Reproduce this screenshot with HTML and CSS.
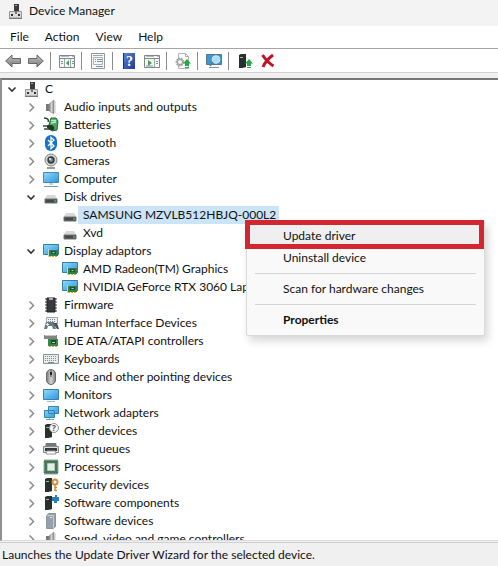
FILE: index.html
```html
<!DOCTYPE html>
<html lang="en">
<head>
<meta charset="utf-8">
<title>Device Manager</title>
<link rel="stylesheet" href="styles.css">
</head>
<body>
<svg class="sprite" aria-hidden="true">
  <defs>
    <linearGradient id="g-blue" x1="0" y1="0" x2="1" y2="1"><stop offset="0" stop-color="#8fdcfb"/><stop offset="1" stop-color="#2f94dc"/></linearGradient>
    <linearGradient id="g-grey" x1="0" y1="0" x2="1" y2="0"><stop offset="0" stop-color="#777"/><stop offset=".5" stop-color="#d5d5d5"/><stop offset="1" stop-color="#808080"/></linearGradient>
    <linearGradient id="g-arrow" x1="0" y1="0" x2="0" y2="1"><stop offset="0" stop-color="#c4c4c4"/><stop offset="1" stop-color="#777"/></linearGradient>
    <linearGradient id="g-help" x1="0" y1="0" x2="1" y2="1"><stop offset="0" stop-color="#5f86d8"/><stop offset="1" stop-color="#1c3a94"/></linearGradient>
  </defs>
  <symbol id="down" viewBox="0 0 16 16"><path d="M4.500 6.500 8 10l3.500-3.500" fill="none" stroke="#333" stroke-width="1.600"/></symbol>
  <symbol id="right" viewBox="0 0 16 16"><path d="M6.500 4.500 10.500 8.500l-4 4" fill="none" stroke="#8c8c8c" stroke-width="1.500"/></symbol>
  <symbol id="pc" viewBox="0 0 16 16"><path d="M6 1h5v7H6z" fill="#3c3c3c"/><path d="M7 2.500h2" stroke="#aaa"/><path d="M1.500 8.500h12V15h-12z" fill="#dcdcdc" stroke="#959595"/><path d="M1 15.500h13" stroke="#777"/><path d="M3 11h2v2H3zM10 11h2v2h-2z" fill="#333"/><path d="M7 8h2v3H7z" fill="#777"/></symbol>
  <symbol id="speaker" viewBox="0 0 16 16"><path d="M3 5h3v7H3z" fill="#777"/><path d="M6 5 11 1v14l-5-3z" fill="url(#g-grey)" stroke="#909090" stroke-width=".6"/><path d="M12 2v12" stroke="#c6c6c6"/></symbol>
  <symbol id="battery" viewBox="0 0 16 16"><path d="M8 1h5l2 3-1 9-5 1-4-3z" fill="#4da65f" stroke="#1f6a32"/><path d="M8 3.500h5M8 6l5-1" stroke="#b9e8c2" stroke-width="1.500"/><path d="M1 1c4 0 5 2 4 4" fill="none" stroke="#23352a" stroke-width="1.400"/><path d="M4 8h4c2 0 4 2 3 5H7l-3-2z" fill="#203b2a"/><path d="M0 9h5M1 12h5" stroke="#34493c" stroke-width="1.300"/></symbol>
  <symbol id="bluetooth" viewBox="0 0 16 16"><rect x="2" y="0" width="12" height="16" rx="6" fill="#1274cf"/><path d="m5 5 6 6-3 2.500v-11L11 5l-6 6" fill="none" stroke="#fff" stroke-width="1.300"/></symbol>
  <symbol id="camera" viewBox="0 0 16 16"><path d="M4 15h8" stroke="#777" stroke-width="1.500"/><circle cx="8" cy="7" r="6" fill="#d5d5d5" stroke="#848484"/><circle cx="8" cy="7" r="3.700" fill="#343b41"/><circle cx="8" cy="7" r="2" fill="#778fa0"/><circle cx="7" cy="6" r="1" fill="#eee"/></symbol>
  <symbol id="computer" viewBox="0 0 16 16"><path d="M.5 1.500h15v10H.5z" fill="url(#g-blue)" stroke="#418ab8"/><path d="M6 12h4v2H6z" fill="#c5d2d9"/><path d="M1 15.500h14" stroke="#7999ac"/></symbol>
  <symbol id="monitor" viewBox="0 0 16 16"><path d="M.5 2.500h15v10H.5z" fill="url(#g-blue)" stroke="#3782b5"/><path d="M4 14.500h8" stroke="#9db9c8"/></symbol>
  <symbol id="disk" viewBox="0 0 16 16"><path d="m4 6-2.500 4h13L12 6z" fill="#d8d8d8"/><path d="M2 10h12v4H2z" fill="#45494b" stroke="#757575"/><path d="M11 12h2" stroke="#55dba7"/></symbol>
  <symbol id="display" viewBox="0 0 16 16"><path d="M.5 1.500h15v10H.5z" fill="url(#g-blue)" stroke="#377da5"/><path d="M6 7h9v6H6z" fill="#318142"/><path d="M8 8h5v3H8z" fill="#24513b"/><path d="M9.500 9.500h2" stroke="#a4dda4"/><path d="M6 13.500h9" stroke="#dfb82e" stroke-dasharray="2 1"/><path d="M5.500 6v8" stroke="#c5d5d9"/></symbol>
  <symbol id="chip" viewBox="0 0 16 16"><path d="M2 2h12M2 5h12M2 8h12M2 11h12M2 14h12" stroke="#777" stroke-width="1.500"/><path d="M4 1h8v14H4z" fill="#37393c" stroke="#222"/><path d="M6 1h4v2H6z" fill="#aaa"/></symbol>
  <symbol id="hid" viewBox="0 0 16 16"><path d="M3.500 2.500h11v6h-11z" fill="#eee" stroke="#9aa8ad"/><path d="M5 4.500h8M5 6.500h8" stroke="#7b8c92" stroke-dasharray="1 1"/><path d="M3 7h8l2 7h-3l-1-3H5l-1 3H1z" fill="#687b85"/><path d="M10 8h4l2 6h-2l-2-3" fill="#405461"/><path d="M3 9.500h3M4.500 8v3" stroke="#e4edf0"/></symbol>
  <symbol id="ide" viewBox="0 0 16 16"><path d="M1 2h13v4H1z" fill="#858585"/><path d="M2 2.500h11" stroke="#c8c8c8"/><path d="M5 6h10v7H5z" fill="#388549"/><path d="M8 7h5v4H8z" fill="#244832"/><path d="M9 9.500h3" stroke="#b4d8a4"/><path d="M6 13.500h8" stroke="#cda832" stroke-dasharray="2 1"/></symbol>
  <symbol id="keyboard" viewBox="0 0 16 16"><path d="M.5 3.500h15v9H.5z" fill="#e8ebec" stroke="#89959b"/><path d="M2 5.500h12M2 7.500h12M2 9.500h12" stroke="#87949a" stroke-dasharray="1 1"/><path d="M5 11.500h6" stroke="#7f8a8f"/></symbol>
  <symbol id="mouse" viewBox="0 0 16 16"><rect x="3.500" y=".5" width="9" height="15" rx="4.500" fill="url(#g-grey)" stroke="#63696e"/><path d="M8 1v7" stroke="#4c555b"/><path d="M8 3v3" stroke="#222" stroke-width="2"/></symbol>
  <symbol id="network" viewBox="0 0 16 16"><path d="M5.500 1.500h10v7h-10zM1.500 5.500h10v7h-10z" fill="url(#g-blue)" stroke="#3685ae"/><path d="M6.500 13v2M3 14.500h8" stroke="#77a5b8"/></symbol>
  <symbol id="tower" viewBox="0 0 16 16"><path d="m2 2 2-1h5v13l-2 1H2z" fill="#28302e"/><path d="M3 4.500h3" stroke="#9eb9a4"/><path d="M6 14.500h2" stroke="#858585"/></symbol>
  <symbol id="printer" viewBox="0 0 16 16"><path d="M3 2h10l1 4H2z" fill="#777"/><path d="M.5 5.500h15v6H.5z" fill="#d7dcde" stroke="#81898c"/><path d="M2 7h12v3H2z" fill="#333a3c"/><path d="M4 10h8l1 3H3z" fill="#fff" stroke="#999"/></symbol>
  <symbol id="processor" viewBox="0 0 16 16"><path d="M1.500 1.500h13v13h-13z" fill="#427657" stroke="#345e46" stroke-width="2" stroke-dasharray="1 1"/><path d="M2 2h12v12H2z" fill="#43775a"/><path d="M4.500 4.500h7v7h-7z" fill="#e1eee5" stroke="#b5c8b9"/></symbol>
  <symbol id="security" viewBox="0 0 16 16"><use href="#tower"/><circle cx="12" cy="5" r="2.500" fill="none" stroke="#cf9140" stroke-width="2"/><path d="M12 7v7M12 10.500h2M12 13.500h2" stroke="#cf9140" stroke-width="1.500"/></symbol>
  <symbol id="component" viewBox="0 0 16 16"><use href="#tower"/><path d="M9 2h3V0h2v2h2v4h-2v2h-3V6H9z" fill="#267fb7"/></symbol>
  <symbol id="software" viewBox="0 0 16 16"><path d="m3.500 2.500 2-2h7v13l-2 2h-7z" fill="#94a1aa" stroke="#8a969e"/><path d="M3.500 2.500h7v13" stroke="#c6ced3" fill="none"/><path d="M7 4.500h2" stroke="#e5eaed"/></symbol>
  <symbol id="arrow" viewBox="0 0 16 16"><path d="M.7 8 7 2v3.500h8.500v5H7V14z" fill="url(#g-arrow)" stroke="#666"/></symbol>
  <symbol id="window" viewBox="0 0 16 16"><path d="M.5 2.500h15v12H.5z" fill="#f5f6f6" stroke="#80878b"/><path d="M1 5.500h14" stroke="#7e8a91"/><path d="M2 3.500h8M13 3.500h2" stroke="#b1b7ba"/></symbol>
  <symbol id="tree-window" viewBox="0 0 16 16"><use href="#window"/><path d="M5.500 6v8M11.500 6v8" stroke="#9ca8ae"/><path d="M2 8.500h2M2 10.500h2M13 8.500h2M13 10.500h2" stroke="#839197"/><path d="M10 7v6l-3-3z" fill="#4e9c4e"/></symbol>
  <symbol id="properties" viewBox="0 0 16 16"><path d="M1.500.5h13v15h-13z" fill="#f8f8f8" stroke="#8c999f"/><path d="M3 2.500h10" stroke="#9aa8af"/><path d="M3.500 4.500h9v7h-9z" fill="none" stroke="#a8b2b8"/><path d="M5 6.500h1M7 6.500h5M5 8.500h1M7 8.500h5M6 13.500h7" stroke="#7d939f"/></symbol>
  <symbol id="action-window" viewBox="0 0 16 16"><use href="#window"/><path d="M10.500 6v8" stroke="#9ca8ae"/><path d="M12 8.500h2M12 10.500h2M2 13h7" stroke="#839197"/><path d="M4 7v6l4-3z" fill="#4e9c4e"/></symbol>
  <symbol id="up" viewBox="0 0 16 16"><path d="m12 6-4 4.500h2V13h4v-2.500h2z" fill="#2ba646"/><path d="M10 14.500h4" stroke="#2ba646"/></symbol>
  <symbol id="update" viewBox="0 0 16 16"><path d="M3.500.5h7l3 3v12h-10z" fill="#fafafa" stroke="#b5b5b5"/><path d="M10.500.5v3h3" fill="none" stroke="#a9a9a9"/><circle cx="5" cy="9" r="3.300" fill="#eee" stroke="#a0a0a0" stroke-width="2.200" stroke-dasharray="1.600 .7"/><circle cx="5" cy="9" r="2.500" fill="#f6f6f6" stroke="#999"/><use href="#up"/></symbol>
  <symbol id="scan" viewBox="0 0 16 16"><path d="M.5 1.500h15v10H.5z" fill="#3c99ce" stroke="#56798d"/><path d="M3 14.500h10" stroke="#8398a4"/><circle cx="10" cy="6.500" r="3.800" fill="#a9dcf5" stroke="#d6eef9"/><path d="m7 9-3 4" stroke="#607b89" stroke-width="1.600"/></symbol>
  <symbol id="install" viewBox="0 0 16 16"><use href="#tower"/><use href="#up"/></symbol>
  <symbol id="remove" viewBox="0 0 16 16"><path d="M2.500 2c2 3 6 8 11 11M13 2C9 5 5 9 3 14" fill="none" stroke="#bd1427" stroke-width="3"/></symbol>
</svg>

<main class="window">
  <header class="titlebar"><svg class="icon"><use href="#pc"/></svg><h1>Device Manager</h1></header>
  <nav class="menubar" aria-label="Main menu"><button>File</button><button>Action</button><button>View</button><button>Help</button></nav>
  <div class="toolbar" role="toolbar" aria-label="Tools">
    <button aria-label="Back"><svg class="icon"><use href="#arrow"/></svg></button>
    <button aria-label="Forward"><svg class="icon flipped"><use href="#arrow"/></svg></button>
    <span class="divider"></span>
    <button aria-label="Show console tree"><svg class="icon"><use href="#tree-window"/></svg></button>
    <span class="divider"></span>
    <button aria-label="Properties"><svg class="icon"><use href="#properties"/></svg></button>
    <span class="divider"></span>
    <button aria-label="Help topics"><svg class="icon" viewBox="0 0 16 16"><path d="M2 0h12v16H2z" fill="url(#g-help)"/><path d="M2.500 0v16" stroke="#193479"/><text x="8.500" y="13" text-anchor="middle" class="icon-help">?</text></svg></button>
    <button aria-label="Show action pane"><svg class="icon"><use href="#action-window"/></svg></button>
    <span class="divider"></span>
    <button aria-label="Update driver"><svg class="icon"><use href="#update"/></svg></button>
    <span class="divider"></span>
    <button aria-label="Scan for changes"><svg class="icon"><use href="#scan"/></svg></button>
    <span class="divider"></span>
    <button aria-label="Add driver"><svg class="icon"><use href="#install"/></svg></button>
    <button aria-label="Uninstall"><svg class="icon"><use href="#remove"/></svg></button>
  </div>
  <section class="pane" aria-label="Devices">
    <ul class="tree">
      <li><div class="row"><button class="toggle" aria-label="Collapse C"><svg class="icon"><use href="#down"/></svg></button><svg class="icon"><use href="#pc"/></svg><span class="label">C</span></div>
        <ul>
          <li><div class="row"><button class="toggle" aria-label="Expand"><svg class="icon"><use href="#right"/></svg></button><svg class="icon"><use href="#speaker"/></svg><span class="label">Audio inputs and outputs</span></div></li>
          <li><div class="row"><button class="toggle" aria-label="Expand"><svg class="icon"><use href="#right"/></svg></button><svg class="icon"><use href="#battery"/></svg><span class="label">Batteries</span></div></li>
          <li><div class="row"><button class="toggle" aria-label="Expand"><svg class="icon"><use href="#right"/></svg></button><svg class="icon"><use href="#bluetooth"/></svg><span class="label">Bluetooth</span></div></li>
          <li><div class="row"><button class="toggle" aria-label="Expand"><svg class="icon"><use href="#right"/></svg></button><svg class="icon"><use href="#camera"/></svg><span class="label">Cameras</span></div></li>
          <li><div class="row"><button class="toggle" aria-label="Expand"><svg class="icon"><use href="#right"/></svg></button><svg class="icon"><use href="#computer"/></svg><span class="label">Computer</span></div></li>
          <li><div class="row"><button class="toggle" aria-label="Collapse"><svg class="icon"><use href="#down"/></svg></button><svg class="icon"><use href="#disk"/></svg><span class="label">Disk drives</span></div>
            <ul>
              <li><div class="row leaf selected"><svg class="icon"><use href="#disk"/></svg><span class="label">SAMSUNG MZVLB512HBJQ-000L2</span></div></li>
              <li><div class="row leaf"><svg class="icon"><use href="#disk"/></svg><span class="label">Xvd</span></div></li>
            </ul></li>
          <li><div class="row"><button class="toggle" aria-label="Collapse"><svg class="icon"><use href="#down"/></svg></button><svg class="icon"><use href="#display"/></svg><span class="label">Display adaptors</span></div>
            <ul>
              <li><div class="row leaf"><svg class="icon"><use href="#display"/></svg><span class="label">AMD Radeon(TM) Graphics</span></div></li>
              <li><div class="row leaf"><svg class="icon"><use href="#display"/></svg><span class="label">NVIDIA GeForce RTX 3060 Laptop</span></div></li>
            </ul></li>
          <li><div class="row"><button class="toggle" aria-label="Expand"><svg class="icon"><use href="#right"/></svg></button><svg class="icon"><use href="#chip"/></svg><span class="label">Firmware</span></div></li>
          <li><div class="row"><button class="toggle" aria-label="Expand"><svg class="icon"><use href="#right"/></svg></button><svg class="icon"><use href="#hid"/></svg><span class="label">Human Interface Devices</span></div></li>
          <li><div class="row"><button class="toggle" aria-label="Expand"><svg class="icon"><use href="#right"/></svg></button><svg class="icon"><use href="#ide"/></svg><span class="label">IDE ATA/ATAPI controllers</span></div></li>
          <li><div class="row"><button class="toggle" aria-label="Expand"><svg class="icon"><use href="#right"/></svg></button><svg class="icon"><use href="#keyboard"/></svg><span class="label">Keyboards</span></div></li>
          <li><div class="row"><button class="toggle" aria-label="Expand"><svg class="icon"><use href="#right"/></svg></button><svg class="icon"><use href="#mouse"/></svg><span class="label">Mice and other pointing devices</span></div></li>
          <li><div class="row"><button class="toggle" aria-label="Expand"><svg class="icon"><use href="#right"/></svg></button><svg class="icon"><use href="#monitor"/></svg><span class="label">Monitors</span></div></li>
          <li><div class="row"><button class="toggle" aria-label="Expand"><svg class="icon"><use href="#right"/></svg></button><svg class="icon"><use href="#network"/></svg><span class="label">Network adapters</span></div></li>
          <li><div class="row"><button class="toggle" aria-label="Expand"><svg class="icon"><use href="#right"/></svg></button><svg class="icon" viewBox="0 0 16 16"><use href="#tower"/><circle cx="11" cy="5" r="4.500" fill="#f7f7f7" stroke="#929292"/><text x="11" y="8" text-anchor="middle" class="icon-query">?</text></svg><span class="label">Other devices</span></div></li>
          <li><div class="row"><button class="toggle" aria-label="Expand"><svg class="icon"><use href="#right"/></svg></button><svg class="icon"><use href="#printer"/></svg><span class="label">Print queues</span></div></li>
          <li><div class="row"><button class="toggle" aria-label="Expand"><svg class="icon"><use href="#right"/></svg></button><svg class="icon"><use href="#processor"/></svg><span class="label">Processors</span></div></li>
          <li><div class="row"><button class="toggle" aria-label="Expand"><svg class="icon"><use href="#right"/></svg></button><svg class="icon"><use href="#security"/></svg><span class="label">Security devices</span></div></li>
          <li><div class="row"><button class="toggle" aria-label="Expand"><svg class="icon"><use href="#right"/></svg></button><svg class="icon"><use href="#component"/></svg><span class="label">Software components</span></div></li>
          <li><div class="row"><button class="toggle" aria-label="Expand"><svg class="icon"><use href="#right"/></svg></button><svg class="icon"><use href="#software"/></svg><span class="label">Software devices</span></div></li>
          <li><div class="row"><button class="toggle" aria-label="Expand"><svg class="icon"><use href="#right"/></svg></button><svg class="icon"><use href="#speaker"/></svg><span class="label">Sound, video and game controllers</span></div></li>
        </ul></li>
    </ul>
    <div class="context-menu" role="menu">
      <button class="active" role="menuitem">Update driver</button>
      <button role="menuitem">Uninstall device</button>
      <hr>
      <button role="menuitem">Scan for hardware changes</button>
      <hr>
      <button class="default" role="menuitem">Properties</button>
    </div>
  </section>
  <footer class="statusbar">Launches the Update Driver Wizard for the selected device.</footer>
</main>
</body>
</html>
```

FILE: styles.css
```css
*,
*::before {
  box-sizing: border-box;
}

body {
  margin: 0;
  font: 12px/18px Lato, "Open Sans", sans-serif;
  color: #111;
}

button {
  margin: 0;
  padding: 0;
  border: 0;
  background: none;
  font: inherit;
  color: inherit;
}

ul {
  margin: 0;
  padding: 0;
  list-style: none;
}

.sprite {
  position: absolute;
  width: 0;
  height: 0;
}

.icon {
  display: block;
  flex: none;
  width: 16px;
  height: 16px;
}

.flipped { transform: scaleX(-1); }

.icon-query { font: bold 8px "Noto Sans", sans-serif; fill: #555; }
.icon-help { font: bold 14px "Liberation Serif", serif; fill: #fff; }

.window {
  display: flex;
  flex-direction: column;
  height: 100vh;
  background: #f0f0f0;
}

.titlebar {
  display: flex;
  flex: none;
  align-items: center;
  gap: 5px;
  height: 26px;
  padding: 0 8px 4px;
  background: #f3f3f3;
}

.titlebar h1 {
  margin: 0;
  font-size: 12px;
  font-weight: 400;
}

.menubar {
  display: flex;
  flex: none;
  gap: 16px;
  height: 23px;
  padding: 0 10px;
  background: #fff;
  border-bottom: 1px solid #a5a5a5;
}

.toolbar {
  display: flex;
  flex: none;
  align-items: center;
  height: 24px;
  padding: 1px 1px 0;
  background: #fff;
  border-bottom: 1px solid #d2d2d2;
}

.toolbar button {
  display: grid;
  place-items: center;
  width: 23px;
  height: 22px;
}

.divider {
  width: 1px;
  height: 18px;
  margin: 0 4px 0 3px;
  background: #8b8b8b;
}

.pane {
  position: relative;
  flex: 1;
  min-height: 0;
  margin-top: 5px;
  overflow: hidden;
  background: #fff;
  border-top: 2px solid #777;
  border-left: 2px solid #909090;
  border-bottom: 1px solid #dcdcdc;
}

.tree { padding-left: 2px; }
.tree ul { padding-left: 19px; }

.row {
  display: flex;
  align-items: center;
  height: 18px;
  white-space: nowrap;
}

.toggle { margin-right: 4px; }
.leaf { padding-left: 20px; }

.label { padding: 0 3px 0 5px; }

.selected .label { background: #cce4f7; }

.context-menu {
  position: absolute;
  top: 140px;
  left: 244px;
  display: flex;
  flex-direction: column;
  width: 239px;
  padding: 4px;
  background: #f9f9f9;
  border: 1px solid #dadada;
  border-radius: 2px;
  box-shadow: 3px 5px 8px rgb(0 0 0 / 16%);
}

.context-menu::before {
  position: absolute;
  top: -1px;
  right: 0;
  left: -2px;
  height: 29px;
  border: 5px solid #d22630;
  content: "";
}

.context-menu button {
  height: 22px;
  padding-left: 32px;
  text-align: left;
}

.context-menu .active { background: #efefef; }
.context-menu .default { font-weight: 700; }

.context-menu hr {
  height: 1px;
  margin: 4px;
  border: 0;
  background: #d4d4d4;
}

.statusbar {
  flex: none;
  height: 24px;
  margin-top: 1px;
  padding: 3px 2px;
  border-top: 1px solid #cfcfcf;
}
```
